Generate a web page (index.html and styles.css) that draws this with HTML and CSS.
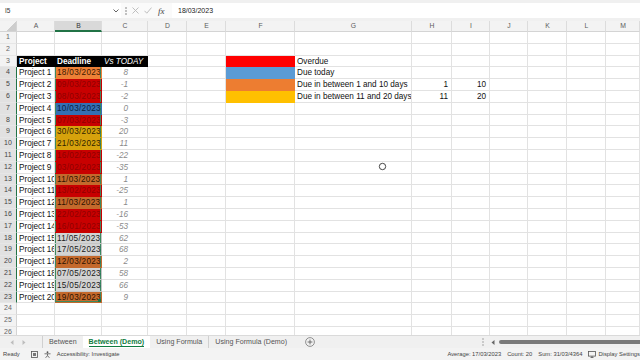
FILE: index.html
```html
<!DOCTYPE html>
<html lang="en">
<head>
    <meta charset="UTF-8">
    <meta name="viewport" content="width=device-width, initial-scale=1.0">
    <title>Between (Demo) - Excel</title>
    <link rel="stylesheet" href="styles.css">
</head>
<body>
    <div class="formula-bar">
        <div class="name-box">
            <span>I5</span>
            <svg width="6" height="4" viewBox="0 0 6 4"><path d="M0.5 0.5 L3 3 L5.5 0.5" fill="none" stroke="#555" stroke-width="0.9"/></svg>
        </div>
        <div class="fx-icons">
            <svg width="2" height="8" viewBox="0 0 2 8"><circle cx="1" cy="1" r="0.8" fill="#777"/><circle cx="1" cy="4" r="0.8" fill="#777"/><circle cx="1" cy="7" r="0.8" fill="#777"/></svg>
            <svg width="7" height="7" viewBox="0 0 7 7"><path d="M0.5 0.5 L6.5 6.5 M6.5 0.5 L0.5 6.5" stroke="#b8b8b8" stroke-width="0.9"/></svg>
            <svg width="8" height="7" viewBox="0 0 8 7"><path d="M0.5 3.8 L2.8 6.2 L7.5 0.6" fill="none" stroke="#b8b8b8" stroke-width="0.9"/></svg>
            <span class="fx">fx</span>
        </div>
        <div class="formula-input">18/03/2023</div>
    </div>

    <div class="sheet" id="sheet"></div>

    <div class="tab-bar">
        <div class="tab-nav">
            <svg width="4" height="5" viewBox="0 0 4 5"><path d="M3.5 0 L0.5 2.5 L3.5 5 Z" fill="#bdbdbd"/></svg>
            <svg width="4" height="5" viewBox="0 0 4 5"><path d="M0.5 0 L3.5 2.5 L0.5 5 Z" fill="#bdbdbd"/></svg>
        </div>
        <div class="tab">Between</div>
        <div class="tab active"><span>Between (Demo)</span></div>
        <div class="tab">Using Formula</div>
        <div class="tab">Using Formula (Demo)</div>
        <div class="tab-add">
            <svg width="10" height="10" viewBox="0 0 10 10"><circle cx="5" cy="5" r="4.4" fill="none" stroke="#777" stroke-width="0.8"/><path d="M5 2.6 V7.4 M2.6 5 H7.4" stroke="#555" stroke-width="0.8"/></svg>
        </div>
        <div class="tab-space"></div>
        <div class="scroll-area">
            <svg width="2" height="8" viewBox="0 0 2 8"><circle cx="1" cy="1" r="0.7" fill="#888"/><circle cx="1" cy="4" r="0.7" fill="#888"/><circle cx="1" cy="7" r="0.7" fill="#888"/></svg>
            <svg width="4" height="5" viewBox="0 0 4 5"><path d="M3.5 0 L0.5 2.5 L3.5 5 Z" fill="#666"/></svg>
            <div class="scroll-thumb"></div>
        </div>
    </div>

    <div class="status-bar">
        <span class="status-ready">Ready</span>
        <svg class="status-icon" width="7" height="7" viewBox="0 0 7 7"><rect x="0.5" y="0.5" width="6" height="6" fill="none" stroke="#555" stroke-width="0.8"/><rect x="2" y="2" width="3" height="3" fill="#777"/></svg>
        <svg class="status-icon" width="7" height="7" viewBox="0 0 7 7"><circle cx="3.5" cy="1.2" r="0.9" fill="#555"/><path d="M0.5 2.8 H6.5 M3.5 2.8 V4.6 L1.6 6.8 M3.5 4.6 L5.4 6.8" fill="none" stroke="#555" stroke-width="0.8"/></svg>
        <span>Accessibility: Investigate</span>
        <span class="status-space"></span>
        <span>Average: 17/03/2023</span>
        <span>Count: 20</span>
        <span>Sum: 31/03/4364</span>
        <svg class="status-icon" width="8" height="7" viewBox="0 0 8 7"><rect x="0.5" y="0.5" width="7" height="4.6" fill="none" stroke="#555" stroke-width="0.8"/><path d="M2.5 6.5 H5.5 M4 5 V6.5" stroke="#555" stroke-width="0.8"/></svg>
        <span class="status-last">Display Settings</span>
    </div>

    <svg class="cursor" width="9" height="9" viewBox="0 0 9 9"><circle cx="4.5" cy="4.5" r="3.2" fill="none" stroke="#fff" stroke-width="2"/><circle cx="4.5" cy="4.5" r="3.2" fill="none" stroke="#333" stroke-width="0.9"/></svg>

    <script>
        const cols = 'ABCDEFGHIJKLM'.split('');
        const sheet = document.getElementById('sheet');

        // [deadline, vs today, fill]
        const projects = [
            ['18/03/2023', 8, 'orange active'],
            ['09/03/2023', -1, 'red'],
            ['08/03/2023', -2, 'red'],
            ['10/03/2023', 0, 'blue'],
            ['07/03/2023', -3, 'red'],
            ['30/03/2023', 20, 'gold'],
            ['21/03/2023', 11, 'gold'],
            ['16/02/2023', -22, 'red'],
            ['03/02/2023', -35, 'red'],
            ['11/03/2023', 1, 'orange'],
            ['13/02/2023', -25, 'red'],
            ['11/03/2023', 1, 'orange'],
            ['22/02/2023', -16, 'red'],
            ['16/01/2023', -53, 'red'],
            ['11/05/2023', 62, 'plain'],
            ['17/05/2023', 68, 'plain'],
            ['12/03/2023', 2, 'orange'],
            ['07/05/2023', 58, 'plain'],
            ['15/05/2023', 66, 'plain'],
            ['19/03/2023', 9, 'orange']
        ];

        const legend = [
            ['lg-red', 'Overdue'],
            ['lg-blue', 'Due today'],
            ['lg-orange', 'Due in between 1 and 10 days', 1, 10],
            ['lg-yellow', 'Due in between 11 and 20 days', 11, 20]
        ];

        function addCell(cls, text) {
            const d = document.createElement('div');
            d.className = 'cell ' + cls;
            d.textContent = text;
            sheet.appendChild(d);
        }

        // column headers
        addCell('corner', '');
        cols.forEach(c => addCell('col-head' + (c === 'B' ? ' picked' : ''), c));

        for (let r = 1; r <= 26; r++) {
            const inSel = r >= 4 && r <= 23;
            addCell('row-head' + (inSel ? ' picked' : ''), r);

            const p = projects[r - 4];
            const lg = legend[r - 3];

            cols.forEach(c => {
                let cls = '';
                let text = '';

                if (r === 3 && c === 'A') { cls = 'head'; text = 'Project'; }
                else if (r === 3 && c === 'B') { cls = 'head'; text = 'Deadline'; }
                else if (r === 3 && c === 'C') { cls = 'head italic'; text = 'Vs TODAY'; }
                else if (p && c === 'A') { text = 'Project ' + (r - 3); }
                else if (p && c === 'B') {
                    cls = 'date sel ' + p[2] + (r === 23 ? ' sel-end' : '');
                    text = p[0];
                }
                else if (p && c === 'C') { cls = 'diff'; text = p[1]; }

                if (lg) {
                    if (c === 'F') cls = lg[0];
                    if (c === 'G') text = lg[1];
                    if (c === 'H' && lg[2]) { cls = 'num'; text = lg[2]; }
                    if (c === 'I' && lg[3]) { cls = 'num'; text = lg[3]; }
                }

                addCell(cls, text);
            });
        }
    </script>
</body>
</html>
```

FILE: styles.css
```css
* {
    box-sizing: border-box;
    margin: 0;
    padding: 0;
}

body {
    width: 640px;
    height: 360px;
    overflow: hidden;
    display: flex;
    flex-direction: column;
    position: relative;
    font-family: 'Liberation Sans', Arial, sans-serif;
    color: #111;
    background: #fff;
}

/* Formula bar */
.formula-bar {
    height: 21px;
    flex: none;
    display: flex;
    align-items: center;
    background: #f0f0f0;
    padding: 3px 0;
}

.name-box {
    width: 121px;
    height: 15px;
    background: #fff;
    display: flex;
    align-items: center;
    justify-content: space-between;
    padding: 0 2px 0 5px;
    font-size: 6.5px;
    color: #333;
}

.fx-icons {
    width: 51px;
    height: 15px;
    display: flex;
    align-items: center;
    gap: 5px;
    padding-left: 4px;
    background: #fafafa;
}

.fx {
    font-family: 'Liberation Serif', serif;
    font-style: italic;
    font-size: 9px;
    color: #444;
    margin-left: 1px;
}

.formula-input {
    flex: 1;
    height: 15px;
    background: #fff;
    display: flex;
    align-items: center;
    padding-left: 6px;
    font-size: 7px;
    color: #222;
}

/* Sheet grid */
.sheet {
    flex: 1;
    min-height: 0;
    overflow: hidden;
    display: grid;
    grid-template-columns: 17px 38px 47px 46px 39px 39px 69px 117px 40px 38px 38px 39px 39px 34px;
    grid-template-rows: 11px repeat(26, 11.8px);
}

.cell {
    border-right: 1px solid #e2e2e2;
    border-bottom: 1px solid #e2e2e2;
    overflow: hidden;
    white-space: nowrap;
    font-size: 8.2px;
    line-height: 11px;
    padding: 0 1px 0 2px;
    position: relative;
}

.corner {
    background: linear-gradient(135deg, #f3f3f3 62%, #cdcdcd 62%);
    border-color: #d4d4d4;
}

.col-head {
    background: #f3f3f3;
    border-bottom: 1px solid #d4d4d4;
    border-right: 1px solid #dcdcdc;
    text-align: center;
    font-size: 6.8px;
    line-height: 10px;
    color: #5b5b5b;
}

.col-head.picked {
    background: #d9d9d9;
    color: #333;
    border-bottom: 2px solid #217346;
}

.row-head {
    background: #f3f3f3;
    border-right: 1px solid #d4d4d4;
    border-bottom-color: #e6e6e6;
    text-align: center;
    font-size: 7px;
    line-height: 10.5px;
    color: #666;
    padding: 0;
}

.row-head.picked {
    background: #e1e1e1;
    color: #444;
    border-right: 1px solid #217346;
}

.head {
    background: #000;
    color: #fff;
    font-weight: bold;
    border-color: #000;
}

.head.italic {
    font-style: italic;
    font-weight: normal;
}

.date {
    text-align: right;
    letter-spacing: 0.3px;
    padding-right: 1px;
}

.sel {
    box-shadow: inset 1px 0 #3c8a5f, inset -1px 0 #3c8a5f;
}

.sel-end {
    box-shadow: inset 1px 0 #3c8a5f, inset -1px 0 #3c8a5f, inset 0 -1px #3c8a5f;
}

.sel-end::after {
    content: '';
    position: absolute;
    right: 0;
    bottom: 0;
    width: 3px;
    height: 3px;
    background: #217346;
}

.red {
    background: #c80000;
    border-color: #c80000;
    color: #8e0000;
}

.orange {
    background: #c4692c;
    border-color: #c4692c;
    color: #2b1200;
}

.orange.active {
    background: #ee8036;
    border-color: #ee8036;
    color: #3a1800;
}

.blue {
    background: #3470b4;
    border-color: #3470b4;
    color: #0a1f40;
}

.gold {
    background: #d6a20c;
    border-color: #d6a20c;
    color: #2e2300;
}

.plain {
    background: #d3d3d3;
    border-color: #c4c4c4;
    color: #1a1a1a;
}

.diff {
    text-align: right;
    font-style: italic;
    color: #8a8a8a;
    padding-right: 19px;
}

.num {
    text-align: right;
    padding-right: 3px;
}

/* Legend fills */
.lg-red { background: #ff0000; border-color: #ff0000; }
.lg-blue { background: #5b9bd5; border-color: #5b9bd5; }
.lg-orange { background: #ed7d31; border-color: #ed7d31; }
.lg-yellow { background: #ffc000; border-color: #ffc000; }

/* Sheet tabs */
.tab-bar {
    height: 13px;
    flex: none;
    display: flex;
    align-items: stretch;
    background: #f0f0f0;
    border-top: 1px solid #dadada;
    font-size: 7.1px;
    color: #555;
}

.tab-nav {
    width: 43px;
    display: flex;
    align-items: center;
    gap: 8px;
    padding-left: 10px;
    border-right: 1px solid #d0d0d0;
}

.tab {
    display: flex;
    align-items: center;
    padding: 0 6px;
    white-space: nowrap;
}

.tab + .tab:not(.active) {
    border-left: 1px solid #d0d0d0;
}

.tab.active + .tab {
    border-left: none;
}

.tab.active {
    background: #fff;
    color: #107c41;
    font-weight: bold;
}

.tab.active span {
    border-bottom: 1.5px solid #107c41;
    line-height: 8px;
}

.tab-add {
    display: flex;
    align-items: center;
    padding-left: 12px;
}

.tab-space {
    flex: 1;
}

.scroll-area {
    width: 160px;
    display: flex;
    align-items: center;
    gap: 7px;
    padding-left: 2px;
}

.scroll-thumb {
    flex: 1;
    height: 4px;
    background: #7a7a7a;
    border-radius: 2px 0 0 2px;
    margin-left: -3px;
}

/* Status bar */
.status-bar {
    height: 12px;
    flex: none;
    display: flex;
    align-items: center;
    gap: 6px;
    padding-left: 3px;
    background: #f3f3f3;
    font-size: 5.8px;
    color: #444;
    white-space: nowrap;
    overflow: hidden;
}

.status-ready {
    margin-right: 5px;
}

.status-icon {
    flex: none;
}

.status-space {
    flex: 1;
}

.status-last {
    margin-left: -4px;
}

.cursor {
    position: absolute;
    left: 378px;
    top: 162px;
}
```
